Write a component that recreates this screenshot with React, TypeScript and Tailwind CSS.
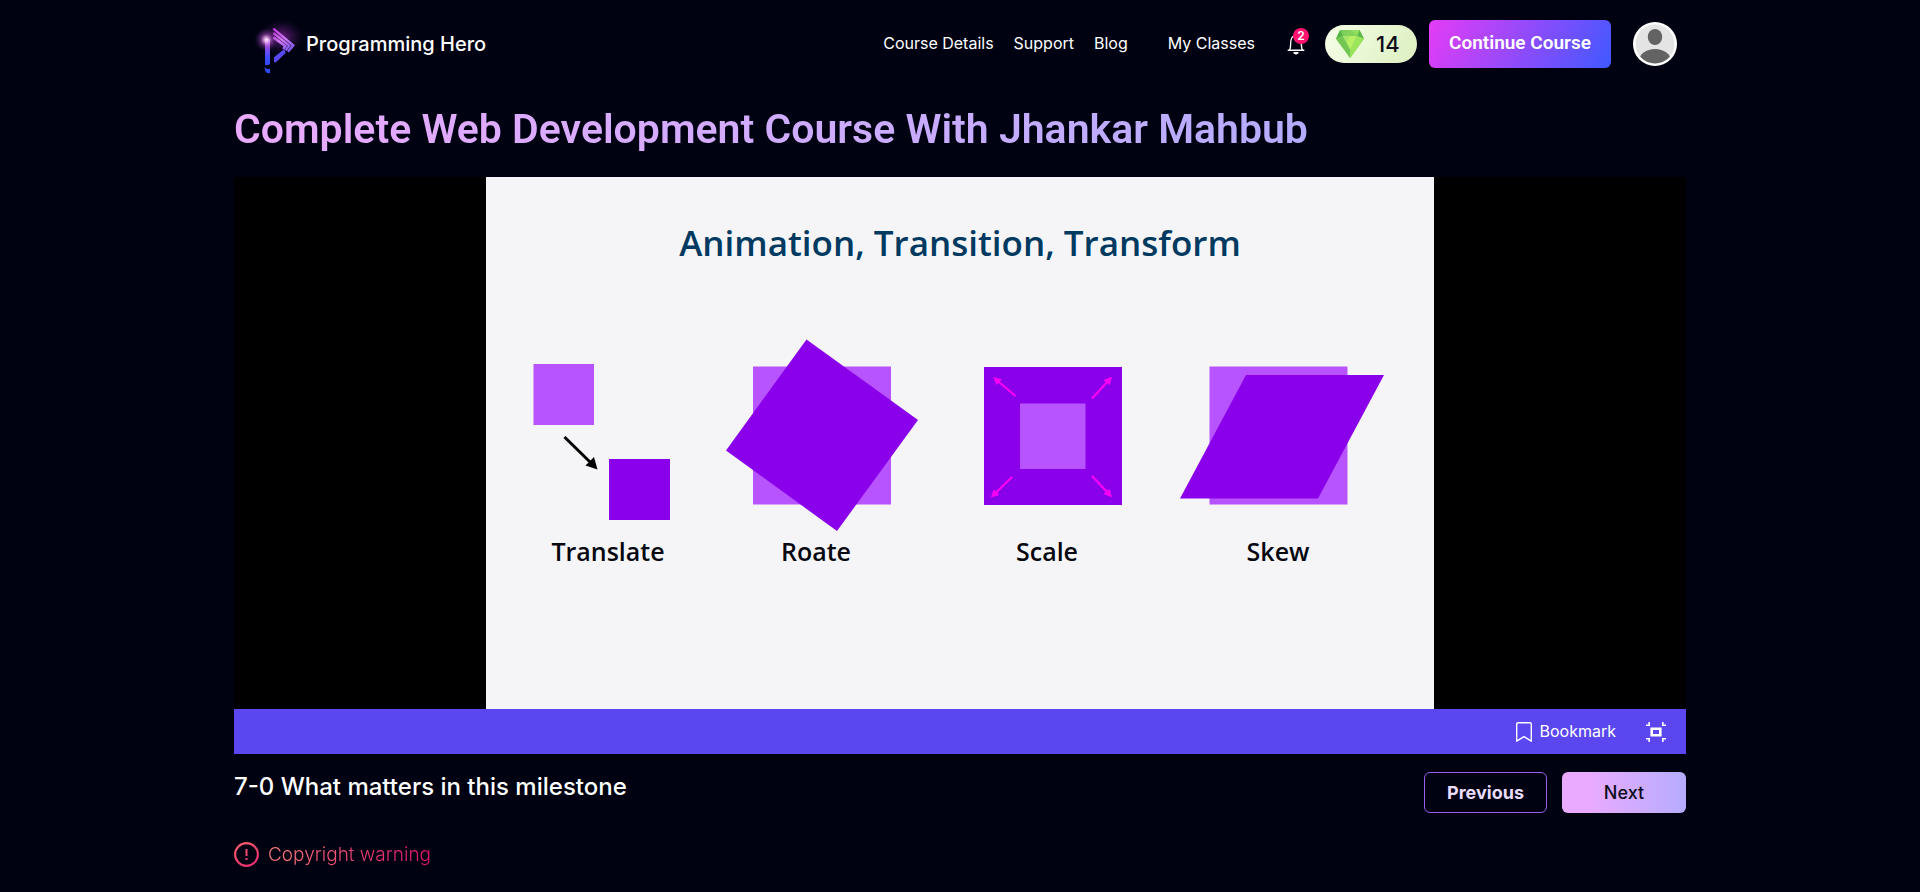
import React from "react";

const navLinks = ["Course Details", "Support", "Blog"];

function Logo() {
  return (
    <svg viewBox="60 50 180 180" className="h-15 w-15 shrink-0 overflow-visible" aria-hidden="true">
      <defs>
        <radialGradient id="spark">
          <stop offset="0" stopColor="#fff0ff" />
          <stop offset="0.2" stopColor="#eeb0f5" stopOpacity="0.85" />
          <stop offset="0.5" stopColor="#b04cc8" stopOpacity="0.45" />
          <stop offset="1" stopColor="#5a1f80" stopOpacity="0" />
        </radialGradient>
        <radialGradient id="halo">
          <stop offset="0" stopColor="#a030b8" stopOpacity="0.65" />
          <stop offset="0.5" stopColor="#70208a" stopOpacity="0.35" />
          <stop offset="1" stopColor="#30104a" stopOpacity="0" />
        </radialGradient>
        <linearGradient id="stem" x1="0" y1="0" x2="0" y2="1">
          <stop offset="0" stopColor="#e9a0f5" />
          <stop offset="0.35" stopColor="#8a50f0" />
          <stop offset="0.7" stopColor="#3f4dfa" />
          <stop offset="1" stopColor="#2f49f2" />
        </linearGradient>
        <linearGradient id="stripe" gradientUnits="userSpaceOnUse" x1="130" y1="80" x2="180" y2="170">
          <stop offset="0" stopColor="#c02be0" />
          <stop offset="0.45" stopColor="#d07cf4" />
          <stop offset="1" stopColor="#5a4af2" />
        </linearGradient>
      </defs>
      <ellipse cx="156" cy="110" rx="66" ry="54" fill="url(#halo)" />
      <path d="M105 116h15v72q0 8-15 6z" fill="url(#stem)" />
      <path d="M103 201q8 7 17 4v14q-15 1-15-12z" fill="#2f49f2" />
      <g fill="none" stroke="url(#stripe)">
        <path d="M130 85L190 135L174 154" strokeWidth="7" />
        <path d="M130 98L178 136L167 150" strokeWidth="7" />
        <path d="M130 111L166 137L160 146" strokeWidth="8" />
      </g>
      <path d="M132 171L163 146L167 158L138 186L132 186z" fill="#5749ef" />
      <circle cx="109" cy="118" r="36" fill="url(#spark)" />
    </svg>
  );
}

function Gem() {
  return (
    <svg viewBox="0 0 81 81" className="h-7 w-7" aria-hidden="true">
      <path d="M12 0h56l13 25-40 56L0 25z" fill="#83d160" />
      <path d="M12 0h29L20 20z" fill="#7bcf5b" />
      <path d="M12 0l8 17L0 25z" fill="#56b348" />
      <path d="M68 0l13 25L61 17z" fill="#5cba4c" />
      <path d="M41 0h27l-7 17z" fill="#92de5e" />
      <path d="M41 0l20 17H20z" fill="#84d45c" />
      <path d="M20 17h41L41 58z" fill="#b8f063" />
      <path d="M0 25l20-8 21 41v23z" fill="#72c653" />
      <path d="M81 25l-20-8-20 41v23z" fill="#9be45c" />
      <path d="M20 17l21 0-11 20z" fill="#a6e566" />
    </svg>
  );
}

function Bell() {
  return (
    <svg viewBox="0 0 18 21" className="h-[21px] w-[18px]" fill="none" stroke="#fff" strokeWidth="1.4" strokeLinecap="round" strokeLinejoin="round" aria-hidden="true">
      <path d="M1.2 16.3h15.6M2.6 16c1-1.5 1-3 1-5.5C3.6 5 4.5 1.5 9 1.5s5.4 3.5 5.4 9c0 2.5 0 4 1 5.5" />
      <path d="M7 18.8h4l-2 1z" fill="#fff" />
    </svg>
  );
}

function Avatar() {
  return (
    <svg viewBox="0 0 44 44" className="h-11 w-11" aria-hidden="true">
      <defs>
        <clipPath id="face"><circle cx="22" cy="22" r="19.5" /></clipPath>
      </defs>
      <circle cx="22" cy="22" r="22" fill="#fff" />
      <g clipPath="url(#face)">
        <path d="M0 0h44v44H0z" fill="#e4e4e4" />
        <ellipse cx="22" cy="15" rx="7.2" ry="8" fill="#636363" />
        <ellipse cx="22" cy="39" rx="16" ry="12" fill="#636363" />
      </g>
    </svg>
  );
}

function Slide() {
  return (
    <div className="mx-auto flex aspect-[948/532] w-[948px] max-w-full flex-col bg-[#f5f5f8] pt-[42px] font-['Open_Sans',sans-serif]">
      <h2 className="text-center text-[35px] leading-[48px] font-semibold text-[#003a61]">
        Animation, Transition, Transform
      </h2>
      <svg viewBox="486 267 948 442" className="w-full" role="img" aria-label="Four kinds of transform">
        <defs>
          <marker id="pinkTip" viewBox="0 0 8 8" refX="5" refY="4" markerWidth="8" markerHeight="8" markerUnits="userSpaceOnUse" orient="auto">
            <path d="M0 0L8 4L0 8z" fill="#ff00f5" />
          </marker>
        </defs>
        <g fill="#b854ff">
          <path d="M533.5 364h60.5v61h-60.5z" />
          <path d="M753 366.5h138v138H753z" />
          <path d="M1209.5 366.5h138v138h-138z" />
        </g>
        <g fill="#8b00ea">
          <path d="M609 459h61v61h-61z" />
          <path d="M806.5 339.5L918 420L837 531L726 450.5z" />
          <path d="M984 367h138v138H984z" />
          <path d="M1246 375h138l-66 123.5h-138z" />
        </g>
        <path d="M1020 403.5h65.5V469H1020z" fill="#b854ff" />
        <path d="M564.5 437L590 462" stroke="#000" strokeWidth="3" />
        <path d="M597.5 469.5L585.5 465.5L594 457z" fill="#000" />
        <g stroke="#ff00f5" strokeWidth="2.2">
          <path d="M1015.5 396L995.5 379" markerEnd="url(#pinkTip)" />
          <path d="M1092 398.5L1110 379" markerEnd="url(#pinkTip)" />
          <path d="M1012 477L993 495.5" markerEnd="url(#pinkTip)" />
          <path d="M1092 476L1110 495" markerEnd="url(#pinkTip)" />
        </g>
        <g className="text-[25px] font-semibold" fill="#06070f" textAnchor="middle">
          <text x="608" y="561">Translate</text>
          <text x="816" y="561">Roate</text>
          <text x="1047" y="561">Scale</text>
          <text x="1278" y="561">Skew</text>
        </g>
      </svg>
    </div>
  );
}

export default function App() {
  return (
    <div className="min-h-screen bg-[#000211] font-['Inter',sans-serif] text-white">
      <div className="mx-auto max-w-[1452px]">
        <header className="flex h-22 items-center justify-between pr-[9px] pl-4">
          <a href="#home" className="flex items-center">
            <span className="pt-1.5"><Logo /></span>
            <span className="-ml-1 text-xl font-medium">Programming Hero</span>
          </a>
          <div className="flex items-center">
            <nav className="flex items-center gap-5 pb-0.5 text-base">
              {navLinks.map((label) => (
                <a key={label} href="#nav">{label}</a>
              ))}
              <a href="#classes" className="ml-5">My Classes</a>
            </nav>
            <button type="button" aria-label="Notifications" className="relative ml-8">
              <Bell />
              <span className="absolute -top-1.5 left-1.5 flex h-4 w-4 items-center justify-center rounded-full bg-[#ff136f] text-xs font-semibold">2</span>
            </button>
            <div className="ml-5 flex h-[38px] w-[92px] items-center gap-3 rounded-full bg-[linear-gradient(117deg,#f5ffe8,#dcefc0)] pl-[11px] text-[22px] font-medium text-[#0b0d1a]">
              <Gem />14
            </div>
            <button type="button" className="ml-3 h-12 w-[182px] rounded-md bg-[linear-gradient(117deg,#e53cf6,#4059ff)] pb-0.5 font-['Roboto',sans-serif] text-[19px] font-semibold">
              Continue Course
            </button>
            <button type="button" aria-label="Profile" className="ml-[22px]"><Avatar /></button>
          </div>
        </header>
        <main>
          <h1 className="w-fit bg-gradient-to-r from-[#eaaaff] to-[#b5acff] bg-clip-text pt-[13px] pb-[19px] font-['Roboto',sans-serif] text-[41px] leading-[57px] font-semibold text-transparent">
            Complete Web Development Course With Jhankar Mahbub
          </h1>
          <section className="bg-black"><Slide /></section>
          <div className="flex h-[45px] items-center justify-end gap-[30px] bg-[#5b47f0] pr-5">
            <button type="button" className="flex items-center gap-2 text-base">
              <svg viewBox="0 0 16 20" className="h-5 w-4" fill="none" stroke="#fff" strokeWidth="1.4" strokeLinejoin="round" aria-hidden="true">
                <path d="M.7 2.2Q.7.7 2.2.7h11.6q1.5 0 1.5 1.5v17L8 14.6L.7 19.2z" />
              </svg>
              <span className="pb-0.5">Bookmark</span>
            </button>
            <button type="button" aria-label="Full screen">
              <svg viewBox="0 0 20 20" className="h-5 w-5" fill="none" stroke="#fff" strokeWidth="1.6" aria-hidden="true">
                <path d="M0 3.2h3.2V0M16.8 0v3.2H20M20 16.8h-3.2V20M3.2 20v-3.2H0" />
                <path d="M5.7 6.7h8.6v6.6H5.7z" strokeWidth="2.6" />
              </svg>
            </button>
          </div>
          <div className="flex items-start justify-between pt-[18px]">
            <h2 className="text-[24px] leading-[30px] font-medium">7-0 What matters in this milestone</h2>
            <div className="flex gap-[15px]">
              <button type="button" className="h-[41px] w-[123px] rounded-md border border-[#9b5cf0] text-lg font-bold text-[#eadcff]">Previous</button>
              <button type="button" className="h-[41px] w-[124px] rounded-md bg-gradient-to-r from-[#eaaaff] from-20% to-[#b5acff] text-lg font-medium text-[#0b0d1a]">Next</button>
            </div>
          </div>
          <div className="flex items-center gap-[9px] pt-[29px]">
            <svg viewBox="0 0 25 25" className="h-[25px] w-[25px]" aria-hidden="true">
              <defs>
                <linearGradient id="warn" gradientUnits="userSpaceOnUse" x1="4" y1="0" x2="20" y2="25">
                  <stop offset="0" stopColor="#ff5f6d" />
                  <stop offset="1" stopColor="#ee2a6f" />
                </linearGradient>
              </defs>
              <circle cx="12.5" cy="12.5" r="11.4" fill="none" stroke="url(#warn)" strokeWidth="2.1" />
              <path d="M11.5 7h2v7h-2zM11.5 16h2v2h-2z" fill="url(#warn)" />
            </svg>
            <p className="bg-[linear-gradient(100deg,#ff7d7d,#e0106b)] bg-clip-text text-[19px] leading-6 font-light text-transparent">Copyright warning</p>
          </div>
        </main>
      </div>
    </div>
  );
}
